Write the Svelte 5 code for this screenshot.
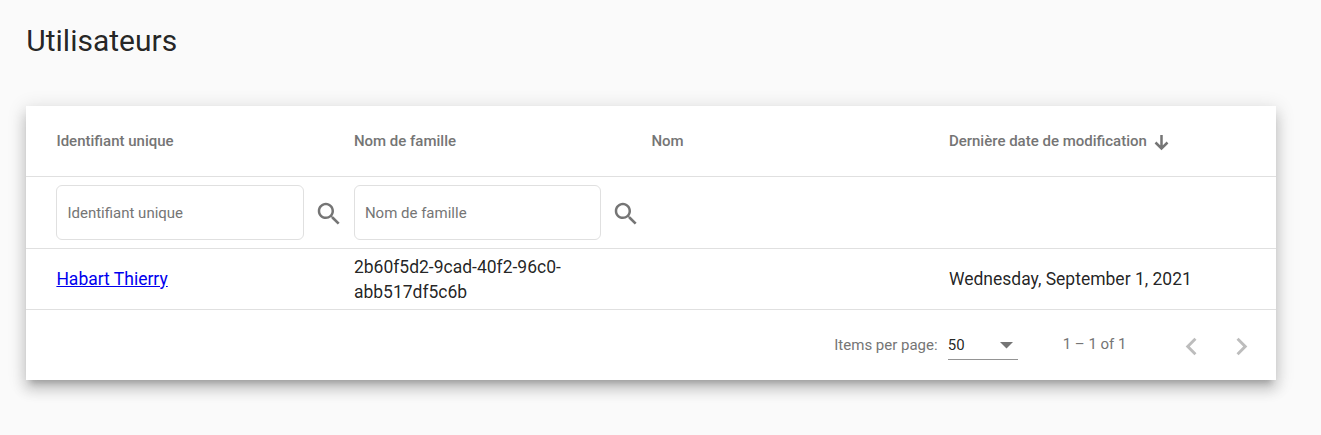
<script>
  const columns = ['Identifiant unique', 'Nom de famille', 'Nom', 'Dernière date de modification'];
  const filters = ['Identifiant unique', 'Nom de famille'];
</script>

<main>
  <h1>Utilisateurs</h1>
  <section class="card">
    <div class="row header">
      {#each columns as column, i}
        <div class="cell">
          <span>{column}</span>
          {#if i === 3}
            <svg class="sort" width="15" height="16" viewBox="0 0 15 16"><path d="M7.5 0v13M1.5 7.5l6 6 6-6" /></svg>
          {/if}
        </div>
      {/each}
    </div>
    <div class="row filter">
      {#each filters as label}
        <div class="cell">
          <div class="field">{label}</div>
          <svg class="search" width="30" height="30" viewBox="0 0 24 24"><path d="M15.5 14h-.79l-.28-.27C15.41 12.59 16 11.11 16 9.5 16 5.91 13.09 3 9.5 3S3 5.91 3 9.5 5.91 16 9.5 16c1.61 0 3.09-.59 4.23-1.57l.27.28v.79l5 4.99L20.49 19l-4.99-5zm-6 0C7.01 14 5 11.99 5 9.5S7.01 5 9.5 5 14 7.01 14 9.5 11.99 14 9.5 14z" /></svg>
        </div>
      {/each}
      <div class="cell"></div>
      <div class="cell"></div>
    </div>
    <div class="row data">
      <div class="cell"><a href="#user">Habart Thierry</a></div>
      <div class="cell identifier">2b60f5d2-9cad-40f2-96c0-<br />abb517df5c6b</div>
      <div class="cell"></div>
      <div class="cell">Wednesday, September 1, 2021</div>
    </div>
    <footer>
      <span class="label">Items per page:</span>
      <div class="select">
        <span>50</span>
        <svg width="13" height="7" viewBox="0 0 13 7"><path d="M0 0h13L6.5 6.5z" /></svg>
      </div>
      <span class="range">1 – 1 of 1</span>
      <svg class="nav" width="35" height="35" viewBox="0 0 24 24"><path d="M15.41 7.41L14 6l-6 6 6 6 1.41-1.41L10.83 12z" /></svg>
      <svg class="nav next" width="35" height="35" viewBox="0 0 24 24"><path d="M10 6L8.59 7.41 13.17 12l-4.58 4.59L10 18l6-6z" /></svg>
    </footer>
  </section>
</main>

<style>
  :global(body) {
    background: #fafafa;
  }
  main {
    box-sizing: border-box;
    height: 435px;
    padding: 21px 45px 0 26px;
    font-family: Roboto, sans-serif;
    color: rgba(0, 0, 0, 0.87);
  }
  h1 {
    margin: 0 0 45px;
    padding-left: 0.3px;
    font-size: 30px;
    line-height: 40px;
    font-weight: 400;
  }
  .card {
    height: 274px;
    background: #fff;
    box-shadow:
      0 6.25px 6.25px -3.75px rgba(0, 0, 0, 0.2),
      0 10px 12.5px 1.25px rgba(0, 0, 0, 0.14),
      0 3.75px 17.5px 2.5px rgba(0, 0, 0, 0.12);
  }
  .row {
    box-sizing: border-box;
    display: grid;
    grid-template-columns: repeat(4, 297.5px);
    padding: 0 29.6px 0 30.4px;
    border-bottom: 1px solid #e0e0e0;
  }
  .cell {
    display: flex;
    align-items: center;
  }
  .header {
    height: 71px;
    font-size: 15px;
    font-weight: 500;
    color: #757575;
  }
  .sort {
    margin: 3px 0 0 7.5px;
    fill: none;
    stroke: #757575;
    stroke-width: 2.5;
  }
  .filter {
    height: 72px;
  }
  .field {
    box-sizing: border-box;
    width: 247.4px;
    height: 55px;
    padding: 0 10px;
    border: 1px solid #e0e0e0;
    border-radius: 6px;
    font-size: 15px;
    line-height: 54px;
    color: #757575;
  }
  .search {
    margin: 2px 0 0 10.2px;
    fill: #757575;
  }
  .data {
    height: 61px;
    font-size: 17.5px;
    line-height: 25px;
  }
  .identifier {
    padding-top: 1px;
  }
  a {
    color: #0000ee;
  }
  footer {
    display: flex;
    align-items: center;
    height: 70px;
    padding-right: 17px;
    justify-content: flex-end;
    font-size: 15px;
    color: #757575;
  }
  .select {
    box-sizing: border-box;
    display: flex;
    align-items: center;
    justify-content: space-between;
    width: 70.4px;
    height: 30px;
    margin: 0 44.5px 0 10.2px;
    padding-right: 5px;
    border-bottom: 1px solid #949494;
    color: rgba(0, 0, 0, 0.87);
  }
  .select svg {
    margin-top: 2px;
    fill: #757575;
  }
  .range {
    margin: 0 47.5px 2px 0;
  }
  .nav {
    margin-top: 3px;
    fill: #bdbdbd;
  }
  .next {
    margin-left: 15px;
  }
</style>
